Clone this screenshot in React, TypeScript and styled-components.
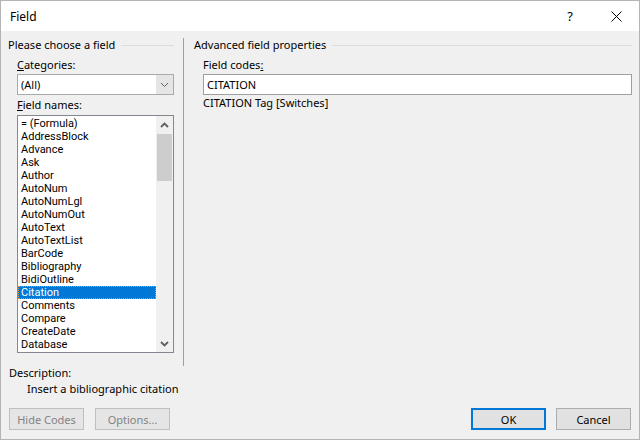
import React from "react";
import styled, { createGlobalStyle } from "styled-components";

const GlobalStyle = createGlobalStyle`
  html, body { margin: 0; padding: 0; background: #f0f0f0; }
  body {
    font-family: "Noto Sans", "Segoe UI", sans-serif;
    font-size: 11px;
    color: #000;
  }
`;

const Window = styled.div`
  box-sizing: border-box;
  width: 640px;
  height: 440px;
  border: 1px solid #b4b4b4;
  background: #f0f0f0;
  display: flex;
  flex-direction: column;
`;

const TitleBar = styled.div`
  height: 30px;
  background: #fff;
  display: flex;
  align-items: center;
  padding-left: 9px;
  flex-shrink: 0;
  font-size: 12px;
`;

const Title = styled.span`
  flex: 1;
`;

const TitleButton = styled.div`
  width: 46px;
  height: 30px;
  display: flex;
  align-items: center;
  justify-content: center;
  font-size: 13px;
`;

const Body = styled.div`
  flex: 1;
  display: flex;
  flex-direction: column;
  padding: 7px 7px 9px 7px;
`;

const Main = styled.div`
  display: flex;
  height: 328px;
`;

const LeftCol = styled.div`
  width: 166px;
  display: flex;
  flex-direction: column;
`;

const RightCol = styled.div`
  flex: 1;
  margin-left: 10px;
  display: flex;
  flex-direction: column;
`;

const Separator = styled.div`
  width: 1px;
  margin-left: 9px;
  background: #a0a0a0;
`;

const GroupHeader = styled.div`
  display: flex;
  align-items: center;
  height: 14px;
  line-height: 14px;
  &::after {
    content: "";
    flex: 1;
    height: 1px;
    margin-left: 6px;
    background: #dcdcdc;
  }
`;

const Label = styled.div<{ $top?: number }>`
  margin-left: 9px;
  margin-top: ${(p) => p.$top ?? 6}px;
  height: 14px;
  line-height: 14px;
  white-space: nowrap;
`;

const Combo = styled.div`
  box-sizing: border-box;
  margin: 2px 0 0 9px;
  width: 157px;
  height: 21px;
  border: 1px solid #a9a9a9;
  background: #fff;
  display: flex;
`;

const ComboText = styled.div`
  flex: 1;
  padding-left: 3px;
  line-height: 19px;
`;

const ComboButton = styled.div`
  width: 17px;
  background: #e5e5e5;
  display: flex;
  align-items: center;
  justify-content: center;
`;

const ListBox = styled.div`
  box-sizing: border-box;
  margin: 3px 0 0 9px;
  width: 157px;
  height: 238px;
  border: 1px solid #828790;
  background: #fff;
  display: flex;
  overflow: hidden;
`;

const Items = styled.div`
  flex: 1;
  padding: 1px 0 0 1px;
  overflow: hidden;
`;

const Item = styled.div<{ $selected?: boolean }>`
  box-sizing: border-box;
  height: 13px;
  line-height: 11px;
  padding-left: 2px;
  font-family: Roboto, "Noto Sans", sans-serif;
  font-size: 11px;
  white-space: nowrap;
  color: ${(p) => (p.$selected ? "#fff" : "#000")};
  background: ${(p) => (p.$selected ? "#0078d7" : "transparent")};
  border: 1px dotted ${(p) => (p.$selected ? "#ff8c28" : "transparent")};
  margin-left: -1px;
`;

const ScrollBar = styled.div`
  width: 17px;
  background: #f0f0f0;
  display: flex;
  flex-direction: column;
`;

const ScrollArrow = styled.div`
  height: 17px;
  display: flex;
  align-items: center;
  justify-content: center;
`;

const ScrollTrack = styled.div`
  flex: 1;
  padding-top: 1px;
`;

const ScrollThumb = styled.div`
  height: 47px;
  margin: 0 1px;
  background: #cdcdcd;
`;

const TextInput = styled.div`
  box-sizing: border-box;
  margin: 2px 0 0 9px;
  height: 21px;
  border: 1px solid #a0a0a0;
  background: #fff;
  padding-left: 3px;
  line-height: 19px;
`;

const Hint = styled.div`
  margin: 1px 0 0 9px;
  height: 14px;
  line-height: 14px;
`;

const Description = styled.div<{ $indent?: number; $top?: number }>`
  margin-left: ${(p) => p.$indent ?? 1}px;
  margin-top: ${(p) => p.$top ?? 0}px;
  height: 14px;
  line-height: 14px;
`;

const Footer = styled.div`
  margin-top: 12px;
  display: flex;
  justify-content: space-between;
  padding: 0 1px 0 1px;
`;

const ButtonGroup = styled.div<{ $gap: number }>`
  display: flex;
  gap: ${(p) => p.$gap}px;
`;

const Button = styled.button<{ $primary?: boolean }>`
  box-sizing: border-box;
  width: 75px;
  height: 22px;
  font: inherit;
  padding: 0;
  color: ${(p) => (p.disabled ? "#838383" : "#000")};
  border: ${(p) => (p.$primary ? "2px solid #0078d7" : "1px solid #adadad")};
  border-color: ${(p) => (p.disabled ? "#bfbfbf" : undefined)};
  background: ${(p) => (p.disabled ? "#e5e5e5" : "#e1e1e1")};
`;

const U = styled.span`
  text-decoration: underline;
`;

const fields = [
  "= (Formula)",
  "AddressBlock",
  "Advance",
  "Ask",
  "Author",
  "AutoNum",
  "AutoNumLgl",
  "AutoNumOut",
  "AutoText",
  "AutoTextList",
  "BarCode",
  "Bibliography",
  "BidiOutline",
  "Citation",
  "Comments",
  "Compare",
  "CreateDate",
  "Database",
];

const Chevron = ({ up, thin }: { up?: boolean; thin?: boolean }) => (
  <svg width="9" height="6" viewBox="0 0 9 6">
    <polyline
      points={up ? "1,5 4.5,1.5 8,5" : "1,1 4.5,4.5 8,1"}
      fill="none"
      stroke="#606060"
      strokeWidth={thin ? 1 : 1.8}
    />
  </svg>
);

export default function App() {
  return (
    <>
      <GlobalStyle />
      <Window>
        <TitleBar>
          <Title>Field</Title>
          <TitleButton>?</TitleButton>
          <TitleButton>
            <svg width="11" height="11" viewBox="0 0 11 11">
              <path d="M0.5 0.5 L10.5 10.5 M10.5 0.5 L0.5 10.5" stroke="#000" strokeWidth="1" />
            </svg>
          </TitleButton>
        </TitleBar>
        <Body>
          <Main>
            <LeftCol>
              <GroupHeader>Please choose a field</GroupHeader>
              <Label>
                <U>C</U>ategories:
              </Label>
              <Combo>
                <ComboText>(All)</ComboText>
                <ComboButton>
                  <Chevron thin />
                </ComboButton>
              </Combo>
              <Label $top={3}>
                <U>F</U>ield names:
              </Label>
              <ListBox>
                <Items>
                  {fields.map((f) => (
                    <Item key={f} $selected={f === "Citation"}>
                      {f}
                    </Item>
                  ))}
                </Items>
                <ScrollBar>
                  <ScrollArrow>
                    <Chevron up />
                  </ScrollArrow>
                  <ScrollTrack>
                    <ScrollThumb />
                  </ScrollTrack>
                  <ScrollArrow>
                    <Chevron />
                  </ScrollArrow>
                </ScrollBar>
              </ListBox>
            </LeftCol>
            <Separator />
            <RightCol>
              <GroupHeader>Advanced field properties</GroupHeader>
              <Label>
                Field codes<U>:</U>
              </Label>
              <TextInput>CITATION</TextInput>
              <Hint>CITATION Tag [Switches]</Hint>
            </RightCol>
          </Main>
          <Description>Description:</Description>
          <Description $indent={19} $top={2}>
            Insert a bibliographic citation
          </Description>
          <Footer>
            <ButtonGroup $gap={11}>
              <Button disabled>Hide Codes</Button>
              <Button disabled>Options...</Button>
            </ButtonGroup>
            <ButtonGroup $gap={10}>
              <Button $primary>OK</Button>
              <Button>Cancel</Button>
            </ButtonGroup>
          </Footer>
        </Body>
      </Window>
    </>
  );
}
